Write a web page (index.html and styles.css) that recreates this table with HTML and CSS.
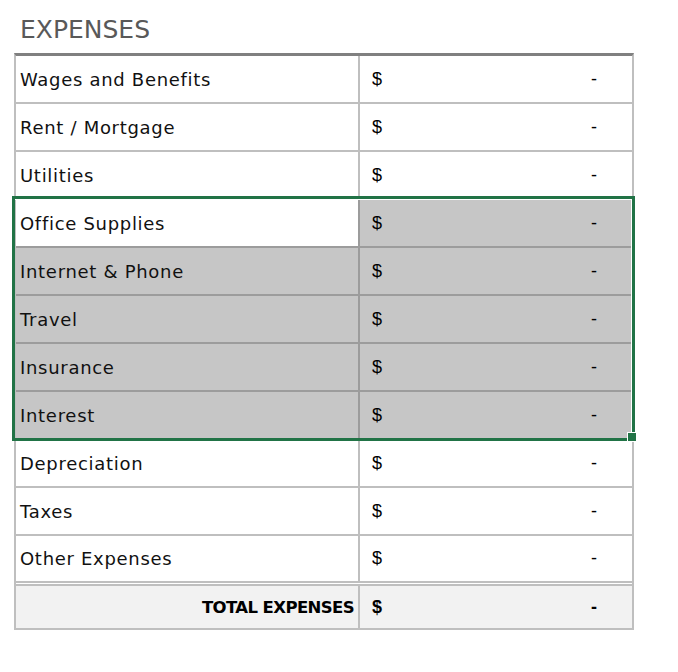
FILE: index.html
```html
<!DOCTYPE html>
<html>
<head>
<meta charset="utf-8">
<link rel="stylesheet" href="styles.css">
</head>
<body>
<div class="title">EXPENSES</div>
<div class="sheet">
  <div class="row"><div class="label">Wages and Benefits</div><div class="amt"><span>$</span><span>-</span></div></div>
  <div class="row"><div class="label">Rent / Mortgage</div><div class="amt"><span>$</span><span>-</span></div></div>
  <div class="row"><div class="label">Utilities</div><div class="amt"><span>$</span><span>-</span></div></div>
  <div class="row sel"><div class="label active">Office Supplies</div><div class="amt"><span>$</span><span>-</span></div></div>
  <div class="row sel"><div class="label">Internet &amp; Phone</div><div class="amt"><span>$</span><span>-</span></div></div>
  <div class="row sel"><div class="label">Travel</div><div class="amt"><span>$</span><span>-</span></div></div>
  <div class="row sel"><div class="label">Insurance</div><div class="amt"><span>$</span><span>-</span></div></div>
  <div class="row sel"><div class="label">Interest</div><div class="amt"><span>$</span><span>-</span></div></div>
  <div class="row"><div class="label">Depreciation</div><div class="amt"><span>$</span><span>-</span></div></div>
  <div class="row"><div class="label">Taxes</div><div class="amt"><span>$</span><span>-</span></div></div>
  <div class="row last"><div class="label">Other Expenses</div><div class="amt"><span>$</span><span>-</span></div></div>
  <div class="row total"><div class="label">TOTAL EXPENSES</div><div class="amt"><span>$</span><span>-</span></div></div>
  <div class="selection"></div>
  <div class="handle"></div>
</div>
</body>
</html>
```

FILE: styles.css
```css
html, body {
  margin: 0;
  padding: 0;
  background: #fff;
}
body {
  font-family: "DejaVu Sans", sans-serif;
  color: #000;
}
.title {
  box-sizing: border-box;
  height: 53px;
  padding: 15px 0 0 20px;
  font-size: 25px;
  line-height: 30px;
  color: #595959;
}
.sheet {
  position: relative;
  margin-left: 14px;
  width: 620px;
  box-sizing: border-box;
  border-top: 3px solid #808080;
  border-left: 2px solid #bfbfbf;
  border-right: 2px solid #bfbfbf;
  border-bottom: 2px solid #bfbfbf;
}
.row {
  display: flex;
  height: 48px;
  box-sizing: border-box;
  border-bottom: 2px solid #bfbfbf;
}
.label {
  box-sizing: border-box;
  width: 344px;
  border-right: 2px solid #bfbfbf;
  padding-left: 4px;
  display: flex;
  align-items: center;
  font-size: 18px;
  letter-spacing: 0.7px;
  color: #111;
}
.amt {
  flex: 1;
  display: flex;
  align-items: center;
  justify-content: space-between;
  padding: 0 35px 0 12px;
  font-family: "Liberation Sans", Arial, sans-serif;
  font-size: 18px;
}
.row.sel {
  border-bottom-color: #9c9c9c;
}
.row.sel .label,
.row.sel .amt {
  background: #c6c6c6;
}
.row.sel .label {
  border-right-color: #9c9c9c;
}
.row.sel .label.active {
  background: #fff;
}
.row.last {
  height: 50px;
  border-bottom: 5px double #bfbfbf;
}
.row.total {
  height: 42px;
  border-bottom: none;
  background: #f2f2f2;
}
.row.total .label {
  justify-content: flex-end;
  padding: 0 4px 0 0;
  font-weight: bold;
  font-size: 16.5px;
  letter-spacing: -0.6px;
  color: #000;
}
.row.total .amt {
  font-weight: bold;
}
.selection {
  position: absolute;
  left: -4px;
  top: 140px;
  width: 623px;
  height: 245px;
  box-sizing: border-box;
  border: 3px solid #217346;
  box-shadow: inset 0 1px 0 #fff, inset -1px 0 0 #fff;
  pointer-events: none;
}
.handle {
  position: absolute;
  left: 611px;
  top: 376px;
  width: 8px;
  height: 8px;
  background: #217346;
  border: 1px solid #fff;
}
```
